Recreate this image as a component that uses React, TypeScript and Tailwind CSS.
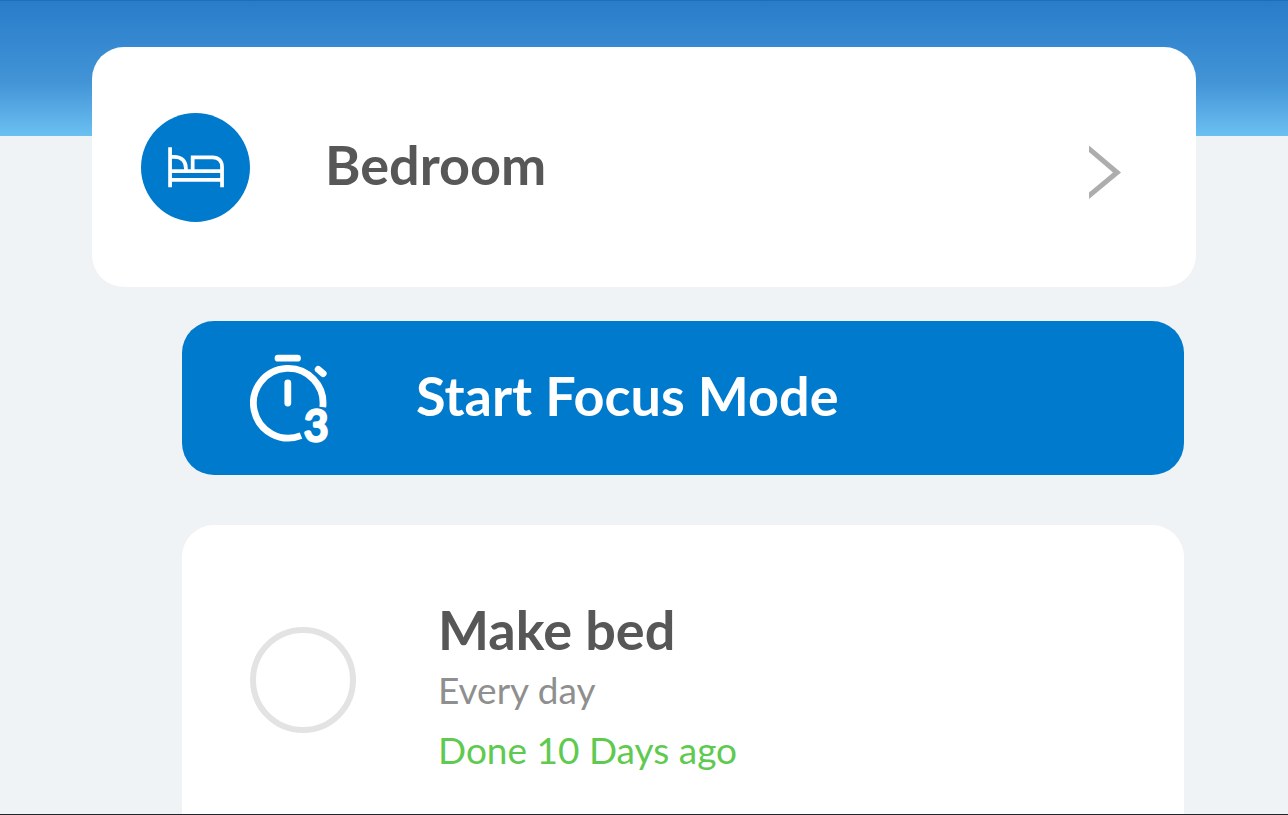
import { useState } from 'react';

function BedIcon() {
  return (
    <svg viewBox="0 0 108 108" className="size-[109px] shrink-0" fill="none" stroke="white" strokeWidth="3.7" aria-hidden="true">
      <circle cx="54" cy="54" r="54" fill="#007acd" stroke="none" />
      <path d="M28.8 34v39.5M80.3 73.5V53.5c0-6-3.5-9.5-9.5-9.5H51.2v14" />
      <path d="M28.8 43.4h4c7.5 0 11.7 4.2 11.7 11.6v3" />
      <path d="M28.8 57.7h51.5M28.8 66.2h51.5" />
    </svg>
  );
}

function TimerIcon() {
  return (
    <svg viewBox="1 -11 80 110" className="w-20 h-[110px] shrink-0" fill="none" stroke="white" strokeWidth="6.8" aria-hidden="true">
      <path d="M29 4.2h19.5M38.8 29v20M69.2 15.4l5 4.2" strokeLinecap="round" />
      <path d="M73.8 53.2A34.8 34.8 0 1 0 52 81.6" />
      <text
        x="55"
        y="86.5"
        fill="white"
        strokeWidth="3.4"
        strokeLinejoin="round"
        className="font-[Lato,sans-serif] text-[42px] font-normal"
      >
        3
      </text>
    </svg>
  );
}

function Chevron() {
  return (
    <svg viewBox="0 0 32 64" className="w-8 h-16 shrink-0" aria-hidden="true">
      <path d="M0 10.5 32 37.5 0 64v-6.5L24 37.5 0 17Z" fill="#adadad" />
    </svg>
  );
}

export default function App() {
  const [done, setDone] = useState(false);

  return (
    <div className="min-h-screen flex flex-col bg-[#eff3f6] border-b border-[#22252a] font-[Lato,sans-serif] text-[#575757]">
      <header className="h-34 shrink-0 border-t border-[#1f6db8] bg-linear-to-b from-[#287dca] via-[#4294d6] via-60% to-[#6bc0f1]" />

      <main className="flex-1 flex flex-col -mt-[89px] px-23">
        <a href="#bedroom" className="h-60 shrink-0 flex items-center bg-white rounded-[32px] pl-[49px] pr-[75px]">
          <BedIcon />
          <h1 className="ml-[75px] pb-1 flex-1 text-[54px] leading-16 font-bold">Bedroom</h1>
          <Chevron />
        </a>

        <div className="flex-1 flex flex-col pl-[90px] pr-3">
          <button
            type="button"
            className="mt-[34px] h-[154px] shrink-0 flex items-center bg-[#007acd] rounded-[32px] px-17 text-white text-[54px] leading-16 font-bold cursor-pointer"
          >
            <TimerIcon />
            <span className="ml-[86px] pb-1">Start Focus Mode</span>
          </button>

          {/* Task card, runs on below the fold */}
          <section className="flex-1 mt-[50px] flex items-start bg-white rounded-t-[32px] px-17 pt-[74px]">
            <input
              id="make-bed"
              type="checkbox"
              checked={done}
              onChange={(e) => setDone(e.target.checked)}
              className="mt-7 size-[106px] shrink-0 appearance-none rounded-full border-6 border-[#e3e3e3] checked:bg-[#5fca50] cursor-pointer"
            />
            <div className="ml-[82px] text-[37px] leading-[60px]">
              <label htmlFor="make-bed" className="block text-[54px] leading-[61px] font-bold">
                Make bed
              </label>
              <p className="text-[#8f8f8f]">Every day</p>
              <p className="text-[#5fca50]">Done 10 Days ago</p>
            </div>
          </section>
        </div>
      </main>
    </div>
  );
}
